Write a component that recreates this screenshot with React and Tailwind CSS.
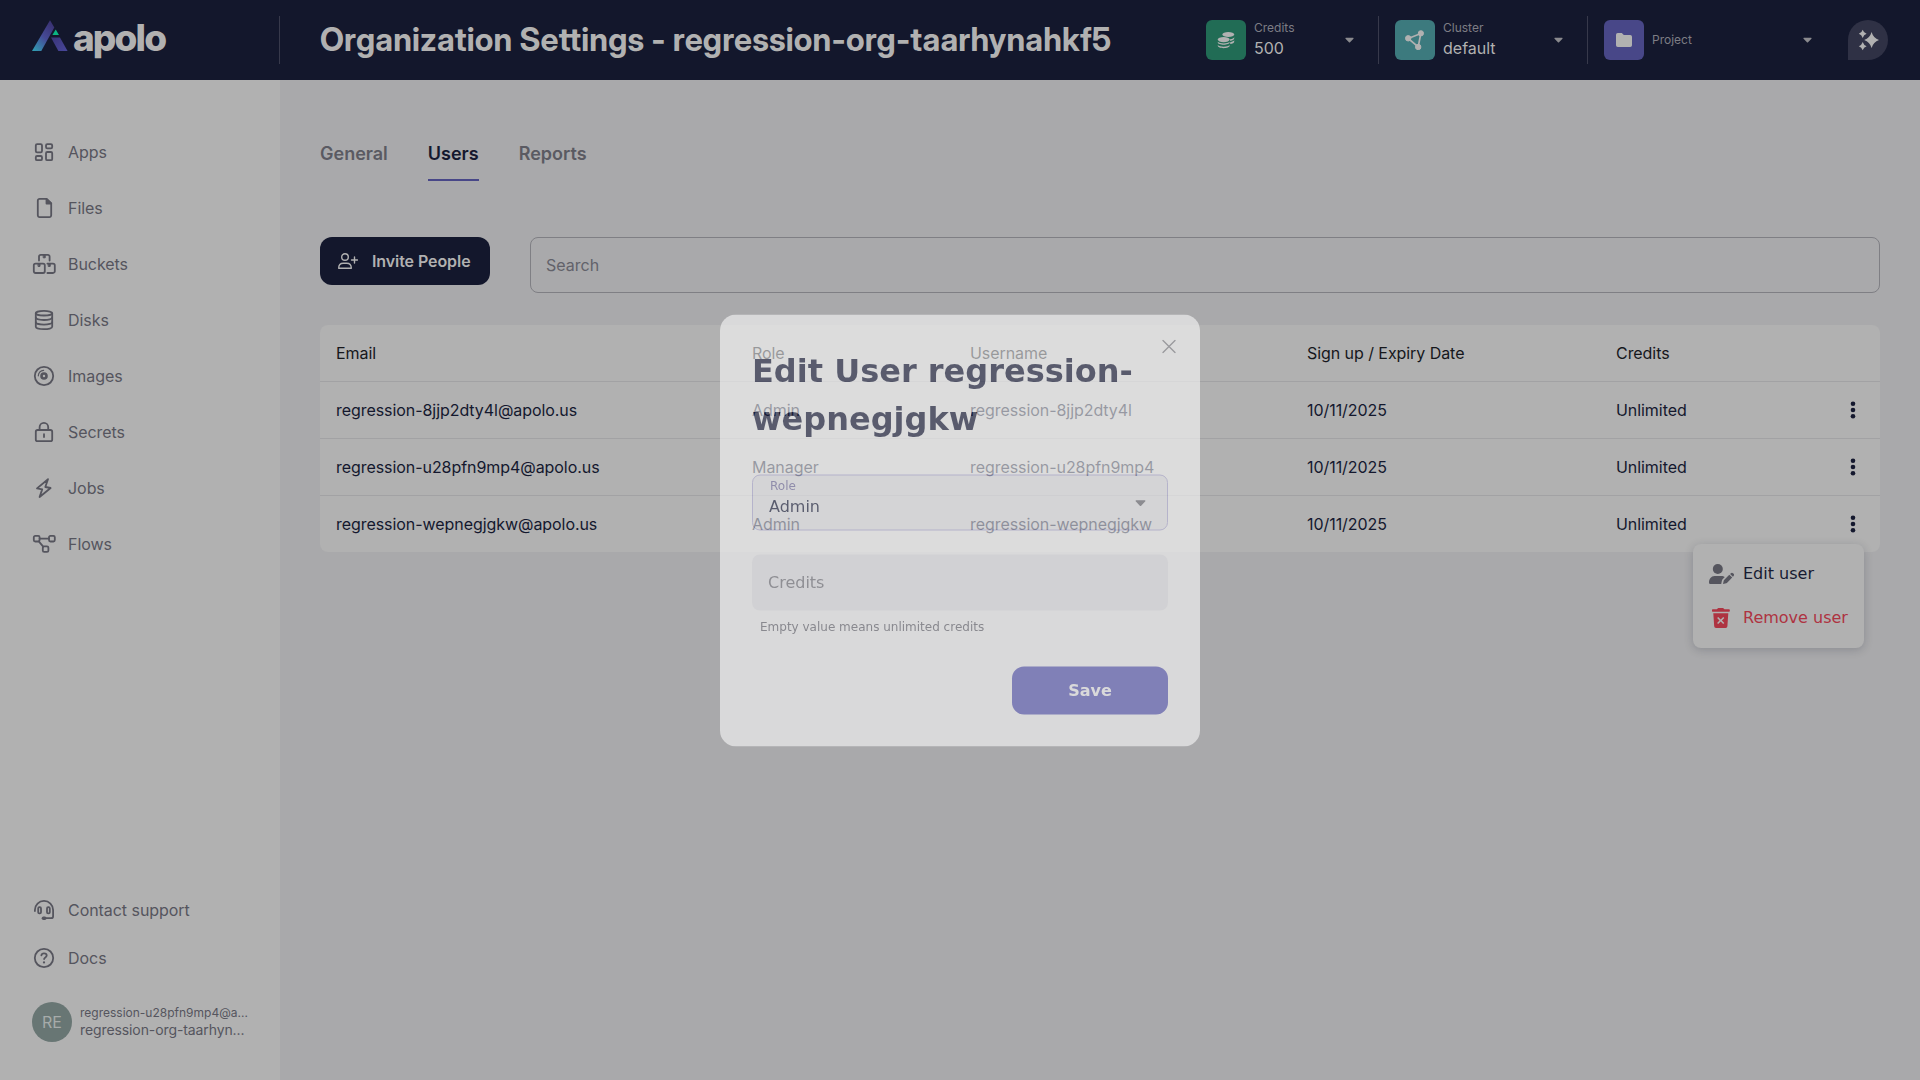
import React from "react";

const Icon = ({ children, className = "size-6" }) => (
  <svg
    viewBox="0 0 24 24"
    className={`shrink-0 ${className}`}
    fill="none"
    stroke="currentColor"
    strokeWidth="1.8"
    strokeLinecap="round"
    strokeLinejoin="round"
  >
    {children}
  </svg>
);

const AppsIcon = () => (
  <Icon>
    <rect x="3.8" y="4.1" width="6.2" height="8.2" rx="1.3" />
    <rect x="14" y="4.1" width="6.2" height="4.2" rx="1.3" />
    <rect x="3.8" y="16" width="6.2" height="4.2" rx="1.3" />
    <rect x="14" y="12" width="6.2" height="8.2" rx="1.3" />
  </Icon>
);

const FileIcon = () => (
  <Icon>
    <path d="M14.5 2.9H7.6a1.8 1.8 0 0 0-1.8 1.8v14.6a1.8 1.8 0 0 0 1.8 1.8h9.8a1.8 1.8 0 0 0 1.8-1.8V7.5z" />
    <path d="M14.5 2.9v4.6h4.7z" fill="currentColor" />
  </Icon>
);

const BucketsIcon = () => (
  <Icon>
    <path d="M7 8.6V4.6a1.7 1.7 0 0 1 1.7-1.7h7.2a1.7 1.7 0 0 1 1.7 1.7v4" />
    <rect x="1.8" y="11.6" width="11" height="9.4" rx="1.7" />
    <path d="M15.4 11.6h5.6a1.8 1.8 0 0 1 1.8 1.8v5.8a1.8 1.8 0 0 1-1.8 1.8h-5.6" />
    <path d="M11.6 3.2h1.6v2.6h-1.6zM6.4 12h1.6v2.4H6.4zM16.6 12h1.6v2.4h-1.6z" fill="currentColor" strokeWidth="1" />
  </Icon>
);

const DisksIcon = () => (
  <Icon>
    <ellipse cx="12" cy="5.2" rx="8.2" ry="2.3" />
    <path d="M3.8 5.2v13.6c0 1.4 3.67 2.4 8.2 2.4s8.2-1 8.2-2.4V5.2" />
    <path d="M3.8 9.6c0 1.4 3.67 2.4 8.2 2.4s8.2-1 8.2-2.4M3.8 14.2c0 1.4 3.67 2.4 8.2 2.4s8.2-1 8.2-2.4" />
  </Icon>
);

const ImagesIcon = () => (
  <Icon>
    <circle cx="12" cy="12" r="9.2" />
    <circle cx="12" cy="12" r="2.5" strokeWidth="2.6" />
    <path d="M6.3 11.8a5.7 5.7 0 0 1 5.3-5.5" strokeWidth="1.2" />
  </Icon>
);

const SecretsIcon = () => (
  <Icon>
    <rect x="3.8" y="10" width="16.4" height="11.2" rx="1.8" />
    <path d="M7.6 10V7.2a4.2 4.2 0 0 1 8.6 0V10M12 14.2v2.8" />
  </Icon>
);

const JobsIcon = () => (
  <Icon>
    <path d="M16 3.2 5 12.4l5.2 1-2.6 7.6L18.6 12l-5.3-1z" />
  </Icon>
);

const FlowsIcon = () => (
  <Icon>
    <rect x="1.8" y="3.9" width="5.8" height="5.6" rx="1.4" />
    <rect x="17" y="3.9" width="5.8" height="5.6" rx="1.4" />
    <rect x="10.8" y="14.3" width="5.6" height="5.6" rx="1.4" />
    <path d="M7.6 6.7H17M6.8 9.4l4.4 5.2" />
  </Icon>
);

const SupportIcon = () => (
  <Icon>
    <path d="M2.9 13v-1a9.1 9.1 0 0 1 18.2 0v6.2a2 2 0 0 1-2 2H14" />
    <rect x="6.2" y="9.2" width="2.8" height="6.2" rx="1.2" />
    <rect x="15" y="9.2" width="2.8" height="6.2" rx="1.2" />
    <path d="M11.4 20.2h1.4" strokeWidth="3.4" />
  </Icon>
);

const DocsIcon = () => (
  <Icon>
    <circle cx="12" cy="12" r="9.2" />
    <path d="M9.4 9.3c.2-1.2 1.2-1.9 2.6-1.9 1.5 0 2.7.9 2.7 2.2 0 1.7-2.6 1.9-2.6 3.4" />
    <path d="M12 16.3v.1" strokeWidth="2.2" />
  </Icon>
);

const nav = [
  ["Apps", AppsIcon],
  ["Files", FileIcon],
  ["Buckets", BucketsIcon],
  ["Disks", DisksIcon],
  ["Images", ImagesIcon],
  ["Secrets", SecretsIcon],
  ["Jobs", JobsIcon],
  ["Flows", FlowsIcon],
];

const support = [
  ["Contact support", SupportIcon],
  ["Docs", DocsIcon],
];

const rows = [
  ["regression-8jjp2dty4l@apolo.us", "Admin", "regression-8jjp2dty4l"],
  ["regression-u28pfn9mp4@apolo.us", "Manager", "regression-u28pfn9mp4"],
  ["regression-wepnegjgkw@apolo.us", "Admin", "regression-wepnegjgkw"],
];

const columns = "grid grid-cols-[416px_218px_337px_309px_1fr_55px] items-center pl-4";

function Logo() {
  return (
    <div className="flex items-start pl-8">
      <svg viewBox="0 0 36 32" className="h-8 w-9 shrink-0">
        <defs>
          <linearGradient id="legLeft" x1="0" y1="1" x2="0.7" y2="0">
            <stop offset="0" stopColor="#2fa3b4" />
            <stop offset="0.55" stopColor="#454a96" />
            <stop offset="1" stopColor="#3a3375" />
          </linearGradient>
          <linearGradient id="legRight" x1="0" y1="0" x2="1" y2="1">
            <stop offset="0" stopColor="#393478" />
            <stop offset="1" stopColor="#48479a" />
          </linearGradient>
        </defs>
        <path d="M18 .2 22.3 7.6 9.3 31H0z" fill="url(#legLeft)" />
        <path d="M19 17.4h9L35.6 31h-9.2z" fill="url(#legRight)" />
        <path d="m23.700 9.500 3.300 5.600h-6.600z" fill="#0bb583" />
      </svg>
      <span className="-mt-[2px] ml-[5px] text-[37px] leading-10 font-extrabold tracking-[-1.9px] text-[#b1b1b1]">apolo</span>
    </div>
  );
}

function Caret({ className }) {
  return (
    <svg viewBox="0 0 10 6" className={className}>
      <path d="M1 .5h8a.6.6 0 0 1 .4 1L5.600 5.400a.8.8 0 0 1-1.200 0L.6 1.500a.6.6 0 0 1 .4-1z" fill="currentColor" />
    </svg>
  );
}

function Selector({ label, value, tile, children, className }) {
  return (
    <div className={`flex h-12 items-center pl-4 ${className}`}>
      <div className={`flex size-10 items-center justify-center rounded-md text-[#b1b1b1] ${tile}`}>{children}</div>
      <div className="ml-2 flex flex-col">
        <span className="text-xs leading-[18px] text-[#7d7d84]">{label}</span>
        {value && <span className="-mt-px pb-px text-base leading-6 text-[#b1b1b1]">{value}</span>}
      </div>
      <Caret className="ml-auto h-[6px] w-[9px] text-[#8a8a8e]" />
    </div>
  );
}

function Header() {
  return (
    <header className="flex h-20 shrink-0 items-center bg-[#13172c]">
      <div className="flex h-12 w-[280px] items-start border-r border-[#37394b] pt-1">
        <Logo />
      </div>
      <h1 className="ml-10 font-['Inter_Display','Inter',sans-serif] text-[32px] leading-10 font-bold tracking-[0.165px] whitespace-nowrap text-[#b1b1b1]">
        Organization Settings - regression-org-taarhynahkf5
      </h1>
      <div className="ml-auto flex items-center pr-8">
        <Selector label="Credits" value="500" tile="bg-[#216c55]" className="w-[188px] pr-[24px]">
          <svg viewBox="0 0 18 18" className="size-[18px]" fill="currentColor">
            <ellipse cx="11.300" cy="3.500" rx="5.900" ry="2.600" />
            <path d="M13 8.200c2.300-.3 4.200-1.100 4.200-2.300v1.700c0 1.100-1.700 2-4 2.300zM13.200 11.200c2.200-.3 4-1.100 4-2.100v1.700c0 1.100-1.700 2-4 2.300z" />
            <ellipse cx="6.700" cy="8.600" rx="5.900" ry="2.600" />
            <path d="M.8 10.800c1 1.200 3.300 1.700 5.900 1.700s4.900-.5 5.900-1.700v.8c0 1.300-2.700 2.200-5.900 2.200s-5.900-.9-5.900-2.200zM.8 14c1 1.200 3.300 1.700 5.900 1.700s4.900-.5 5.900-1.700v.8c0 1.300-2.700 2.400-5.900 2.400S.8 16.100.8 14.800z" />
          </svg>
        </Selector>
        <Selector label="Cluster" value="default" tile="bg-[#3c7a7e]" className="w-[209px] border-l border-[#37394b] pr-[24px]">
          <svg viewBox="0 0 20 20" className="size-5" fill="currentColor" stroke="currentColor">
            <path d="M3.200 8.500 15.800 3.500 13.200 17z" fill="none" strokeWidth="1.700" />
            <circle cx="3.200" cy="8.300" r="2.700" />
            <circle cx="15.900" cy="3.300" r="2.600" />
            <circle cx="13.200" cy="17" r="2.700" />
          </svg>
        </Selector>
        <Selector label="Project" tile="bg-[#484788]" className="w-[261px] border-l border-[#37394b] pr-[36px]">
          <svg viewBox="0 0 16 14" className="h-[14px] w-4" fill="currentColor">
            <path d="M1.800 0h4l2 2h6.400A1.800 1.800 0 0 1 16 3.800v8.400a1.800 1.800 0 0 1-1.800 1.800H1.800A1.800 1.800 0 0 1 0 12.200V1.800A1.800 1.800 0 0 1 1.800 0z" />
          </svg>
        </Selector>
        <div className="flex size-10 items-center justify-center rounded-full rounded-bl-none bg-[#2f3145] text-[#b1b1b1]">
          <svg viewBox="0 0 20 20" className="size-5 overflow-visible" fill="currentColor">
            <path d="M13.600 2q1.800 6.200 7.400 8-5.600 1.800-7.400 8-1.800-6.200-7.400-8 5.600-1.800 7.400-8z" />
            <path d="M4.700-.3q1 3.200 3.900 4.100-2.900.9-3.900 4.100Q3.700 4.700.8 3.800 3.700 2.900 4.700-.3zM4.700 12.100q1 3.200 3.900 4.100-2.900.9-3.900 4.100-1-3.200-3.900-4.100 2.900-.9 3.900-4.100z" />
          </svg>
        </div>
      </div>
    </header>
  );
}

function NavItem({ label, Glyph, className }) {
  return (
    <a className={`flex items-center gap-3 text-base leading-6 tracking-[-0.05px] text-[#55555e] ${className}`}>
      <Glyph />
      {label}
    </a>
  );
}

function Sidebar() {
  return (
    <aside className="flex w-[280px] shrink-0 flex-col bg-[#b1b1b1] px-8 pt-11 pb-[38px]">
      <nav className="flex flex-col">
        {nav.map(([label, Glyph]) => (
          <NavItem key={label} label={label} Glyph={Glyph} className="h-14" />
        ))}
      </nav>
      <div className="mt-auto flex flex-col">
        {support.map(([label, Glyph]) => (
          <NavItem key={label} label={label} Glyph={Glyph} className="h-12" />
        ))}
      </div>
      <div className="mt-5 flex items-center gap-2 text-[#55555e]">
        <div className="flex size-10 shrink-0 items-center justify-center rounded-full bg-[#687674] text-base text-[#a6abaa]">
          RE
        </div>
        <div className="min-w-0">
          <p className="text-xs leading-4 whitespace-nowrap">regression-u28pfn9mp4@a...</p>
          <p className="text-sm leading-[18px] tracking-[-0.1px] whitespace-nowrap">regression-org-taarhyn...</p>
        </div>
      </div>
    </aside>
  );
}

function UserMenu() {
  return (
    <div className="absolute top-12 right-4 flex h-[104px] w-[171px] flex-col rounded-lg bg-[#b1b1b1] pt-2 pl-4 font-['DejaVu_Sans',sans-serif] text-base tracking-normal shadow-[0_2px_10px_rgba(20,24,44,0.2)]">
      <div className="flex h-11 items-center gap-[9px] text-[#171b31]">
        <svg viewBox="0 0 25 20" className="h-5 w-[25px] shrink-0 text-[#55555e]" fill="currentColor">
          <circle cx="8.800" cy="5" r="5" />
          <path d="M5.500 12h7c1.300 0 2.500.4 3.300 1.100l-2.200 2.200c-.4.4-.6.9-.7 1.400l-.7 3.300H1.300A1.300 1.300 0 0 1 0 18.700C0 15 2.200 12 5.500 12z" />
          <path d="m20.300 10.700 2.900 2.900-5.300 5.300-.7.400-3.200.7.700-3.300.4-.7zM21.100 9.900l.8-.7a1.500 1.500 0 0 1 2.100 0l.6.600a1.500 1.500 0 0 1 0 2.100l-.7.800z" />
        </svg>
        <span>Edit user</span>
      </div>
      <div className="flex h-11 items-center gap-[9px] text-[#ae3341]">
        <svg viewBox="0 0 25 20" className="h-5 w-[25px] shrink-0" fill="currentColor">
          <path d="M3.600 1.200h4.300L8.600.4Q8.900 0 9.400 0h4.500q.5 0 .8.400l.7.800h4.600q.8 0 .8.700v1.200q0 .6-.8.600H3.600Q3 3.700 3 3.100V1.900q0-.7.600-.7z" />
          <path fillRule="evenodd" d="M4.300 5.200h15l-.9 13.100A1.800 1.800 0 0 1 16.600 20H7a1.800 1.800 0 0 1-1.800-1.700zM9.200 9 8.100 10.100l2.400 2.400-2.400 2.400L9.200 16l2.500-2.400 2.500 2.400 1.100-1.100-2.400-2.400 2.400-2.400L14.200 9l-2.500 2.400z" />
        </svg>
        <span>Remove user</span>
      </div>
    </div>
  );
}

function UsersTable() {
  return (
    <div className="mt-8 rounded-lg bg-[#b1b1b1] text-base tracking-[-0.06px] text-[#14182e]">
      <div className={`${columns} h-[57px] border-b border-[#a2a2a4] text-[#16171c]`}>
        <span>Email</span>
        <span>Role</span>
        <span>Username</span>
        <span>Sign up / Expiry Date</span>
        <span>Credits</span>
      </div>
      {rows.map(([email, role, name], i) => (
        <div
          key={email}
          className={`${columns} relative ${i < 2 ? "h-[57px] border-b border-[#a2a2a4]" : "h-14"}`}
        >
          <span>{email}</span>
          <span>{role}</span>
          <span>{name}</span>
          <span>10/11/2025</span>
          <span>Unlimited</span>
          <svg viewBox="0 0 6 18" className="h-[18px] w-[6px] justify-self-center" fill="currentColor">
            <circle cx="3" cy="2.700" r="2.300" />
            <circle cx="3" cy="9" r="2.300" />
            <circle cx="3" cy="15.300" r="2.300" />
          </svg>
          {i === 2 && <UserMenu />}
        </div>
      ))}
    </div>
  );
}

function Content() {
  return (
    <main className="flex-1 bg-[#a9a9ab] px-10 pt-14">
      <div className="flex gap-10 text-lg leading-[27px] font-semibold text-[#5a5a62]">
        <span className="pt-1">General</span>
        <span className="border-b-2 border-[#484788] pt-1 pb-3 text-[#14182e]">Users</span>
        <span className="pt-1">Reports</span>
      </div>
      <div className="mt-14 flex items-start gap-10">
        <button className="flex h-12 w-[170px] items-center rounded-xl bg-[#13172c] pl-[18px] text-base font-semibold tracking-[-0.08px] text-[#b1b1b1]">
          <svg viewBox="0 0 20 16" className="h-4 w-5" fill="none" stroke="currentColor" strokeWidth="1.400" strokeLinecap="round" strokeLinejoin="round">
            <circle cx="7" cy="4" r="3.300" />
            <path d="M.7 15.200c0-3 2-4.900 4.600-4.900h3.400c2.600 0 4.600 1.900 4.600 4.900zM16.500 4v6M13.500 7h6" />
          </svg>
          <span className="ml-[14px]">Invite People</span>
        </button>
        <div className="flex h-14 flex-1 items-center rounded-lg border border-[#7f7f84] pl-[15px] text-base text-[#62626a]">
          Search
        </div>
      </div>
      <UsersTable />
    </main>
  );
}

function EditUserDialog() {
  return (
    <div className="absolute inset-0 flex items-start justify-center pt-[314px]">
      <div className="relative w-[480px] translate-y-[0.5px] rounded-2xl bg-white p-8 font-['DejaVu_Sans',sans-serif] text-[#141939] opacity-[0.56] will-change-transform">
        <svg viewBox="0 0 14 14" className="absolute top-[25px] right-[24.5px] size-[14px] text-[#8a8a90]" stroke="currentColor" strokeWidth="1.400" strokeLinecap="round">
          <path d="m1 1 12 12M13 1 1 13" />
        </svg>
        <h2 className="text-[32px] leading-[48px] font-bold">Edit User regression-wepnegjgkw</h2>
        <div className="mt-8 flex h-14 items-center rounded-lg border border-[#b9b5e0] bg-[#f1f1f4] pr-[21px] pl-4">
          <div className="flex flex-col pb-2">
            <span className="-mt-px ml-px pb-px text-xs leading-4 text-[#7771a8]">Role</span>
            <span className="text-base leading-6">Admin</span>
          </div>
          <Caret className="ml-auto h-[7px] w-[11px] text-[#6f6f78]" />
        </div>
        <div className="mt-6 flex h-14 items-center rounded-lg bg-[#f1f1f4] pl-4 text-base text-[#7a7a82]">Credits</div>
        <p className="mt-2 pl-2 text-xs leading-4 text-[#6f6f78]">Empty value means unlimited credits</p>
        <div className="mt-8 flex justify-end">
          <button className="h-12 w-[156px] rounded-xl bg-[#605fc0] text-base font-bold text-white">Save</button>
        </div>
      </div>
    </div>
  );
}

export default function App() {
  return (
    <div className="relative flex h-screen w-full flex-col overflow-hidden font-['Inter',sans-serif]">
      <Header />
      <div className="flex min-h-0 flex-1">
        <Sidebar />
        <Content />
      </div>
      <EditUserDialog />
    </div>
  );
}
